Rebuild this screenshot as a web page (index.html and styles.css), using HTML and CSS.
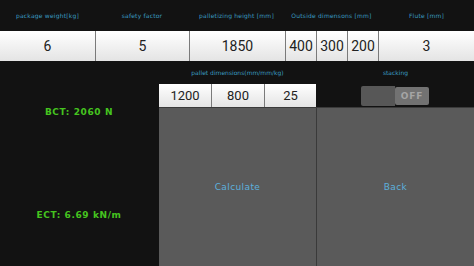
FILE: index.html
```html
<!DOCTYPE html>
<html lang="en">
<head>
  <meta charset="UTF-8">
  <title>BCT Calculator</title>
  <link rel="stylesheet" href="styles.css">
</head>
<body>
  <div class="top-labels">
    <span>package weight[kg]</span>
    <span>safety factor</span>
    <span>palletizing height [mm]</span>
    <span>Outside dimensons [mm]</span>
    <span>Flute [mm]</span>
  </div>
  <div class="top-inputs">
    <div class="cell w95">6</div>
    <div class="cell w94">5</div>
    <div class="cell w95">1850</div>
    <div class="cell w31">400</div>
    <div class="cell w31">300</div>
    <div class="cell w31">200</div>
    <div class="cell grow">3</div>
  </div>
  <div class="main">
    <div class="results">
      <div class="result">BCT: 2060 N</div>
      <div class="result">ECT: 6.69 kN/m</div>
    </div>
    <div class="panel">
      <div class="label">pallet dimensions(mm/mm/kg)</div>
      <div class="pallet-inputs">
        <div class="cell">1200</div>
        <div class="cell">800</div>
        <div class="cell">25</div>
      </div>
      <button class="big-btn">Calculate</button>
    </div>
    <div class="panel">
      <div class="label">stacking</div>
      <div class="toggle-row">
        <div class="toggle">
          <span class="toggle-track"></span>
          <span class="toggle-knob">OFF</span>
        </div>
      </div>
      <button class="big-btn">Back</button>
    </div>
  </div>
</body>
</html>
```

FILE: styles.css
```css
html, body { margin: 0; padding: 0; }
body { width: 474px; height: 266px; background: #121212; font-family: "DejaVu Sans", sans-serif; overflow: hidden; }

.top-labels { display: grid; grid-template-columns: 95px 94px 95px 95px 1fr; height: 31px; align-items: center; }
.top-labels span { text-align: center; color: #3a9cc0; font-size: 6px; letter-spacing: 0.2px; }

.top-inputs { display: flex; height: 30px; background: #7a7a7a; gap: 1px; }
.cell { display: flex; justify-content: center; align-items: center; background: linear-gradient(#ffffff, #e4e4e4); font-family: Roboto, "Liberation Sans", sans-serif; font-size: 14px; color: #222; }
.w95 { width: 95px; }
.w94 { width: 93px; }
.w31 { width: 30px; }
.grow { flex: 1; }

.main { display: grid; grid-template-columns: 158px 157px 1fr; gap: 0 1px; height: 205px; background: #121212; }
.results { display: flex; flex-direction: column; }
.result { flex: 1; display: flex; justify-content: center; align-items: center; color: #45c41f; font-size: 9px; font-weight: bold; letter-spacing: 0.6px; }

.panel { display: flex; flex-direction: column; }
.label { height: 23px; display: flex; justify-content: center; align-items: center; color: #3a9cc0; font-size: 6px; }

.pallet-inputs { display: grid; grid-template-columns: 52px 52px 1fr; gap: 1px; height: 23px; background: #7a7a7a; }
.pallet-inputs .cell { font-size: 13px; }

.toggle-row { height: 23px; display: flex; justify-content: center; align-items: center; }
.toggle { display: flex; width: 69px; height: 20px; border-radius: 2px; overflow: hidden; }
.toggle-track { width: 34px; background: #575757; }
.toggle-knob { flex: 1; background: #727272; color: #a5a5a5; font-weight: bold; font-size: 9px; letter-spacing: 0.8px; display: flex; justify-content: center; align-items: center; margin: 1px 1px 1px 0; border-radius: 2px; }

.big-btn { flex: 1; border: none; border-top: 1px solid #3a3a3a; background: #5a5a5a; color: #5cb0dc; font-family: "DejaVu Sans", sans-serif; font-size: 9px; letter-spacing: 0.4px; padding: 0; margin: 0; }
.main > .panel:last-child .big-btn { border-left: 1px solid #3a3a3a; margin-left: -1px; }
```
